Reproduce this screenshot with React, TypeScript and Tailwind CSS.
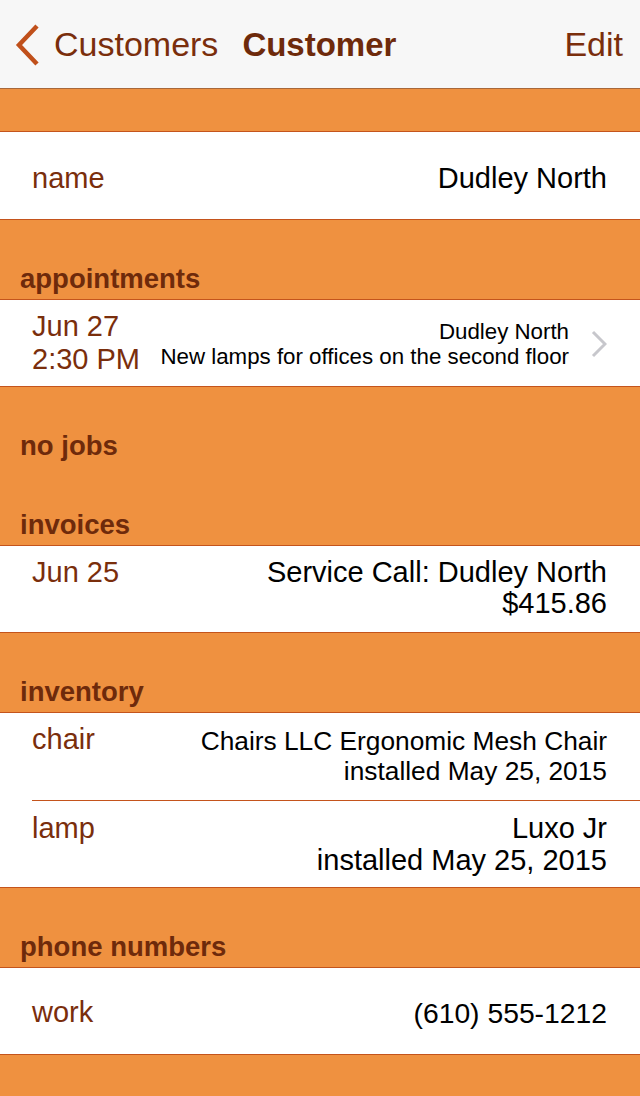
import React from "react";

const FONT = { fontFamily: '"Liberation Sans", Arial, sans-serif' };

function BackChevron() {
  return (
    <svg width="30" height="44" viewBox="0 0 30 44" fill="none">
      <path d="M23 3L5 22l18 19" stroke="#c0501b" strokeWidth="4.5" strokeLinecap="butt" strokeLinejoin="miter" />
    </svg>
  );
}

function Disclosure() {
  return (
    <svg width="16" height="28" viewBox="0 0 16 28" fill="none">
      <path d="M2 2l12 12L2 26" stroke="#c7c7cc" strokeWidth="3" />
    </svg>
  );
}

function Header({ children }: { children: React.ReactNode }) {
  return (
    <p className="text-[27.5px] font-bold leading-[30px] text-[#6e2a0b] px-5">{children}</p>
  );
}

export default function App() {
  return (
    <div className="w-[640px] h-[1096px] overflow-hidden bg-[#ef9140] flex flex-col" style={FONT}>
      {/* nav bar */}
      <div className="h-[89px] shrink-0 bg-[#f7f7f7] border-b border-[#a8683a] flex items-center px-[14px]">
        <div className="flex items-center gap-[10px] pt-[1px]">
          <BackChevron />
          <span className="text-[34px] text-[#7a2e0c]">Customers</span>
          <span className="text-[33px] font-bold text-[#6e2a0b] ml-[14px]">Customer</span>
        </div>
        <span className="ml-auto text-[34px] text-[#7a2e0c] pr-[3px]">Edit</span>
      </div>

      <div className="h-[42px] shrink-0" />

      {/* name */}
      <div className="shrink-0 bg-white border-y border-[#c4541c]">
        <div className="h-[87px] flex items-center justify-between pl-8 pr-[33px] pt-[6px] text-[29px]">
          <span className="text-[#7a2e0c]">name</span>
          <span className="text-black">Dudley North</span>
        </div>
      </div>

      <div className="h-[79px] shrink-0 flex flex-col justify-end pb-[5px]">
        <Header>appointments</Header>
      </div>

      {/* appointment */}
      <div className="shrink-0 bg-white border-y border-[#c4541c]">
        <div className="h-[86px] flex items-center pl-8 pr-[33px]">
          <div className="text-[29px] leading-[33px] text-[#7a2e0c]">
            <p>Jun 27</p>
            <p>2:30 PM</p>
          </div>
          <div className="ml-auto text-right text-[22.3px] leading-[25px] text-black pt-[2px]">
            <p>Dudley North</p>
            <p>New lamps for offices on the second floor</p>
          </div>
          <div className="ml-[22px] pt-[2px]">
            <Disclosure />
          </div>
        </div>
      </div>

      <div className="h-[158px] shrink-0 flex flex-col justify-end pb-[5px] gap-[49px]">
        <Header>no jobs</Header>
        <Header>invoices</Header>
      </div>

      {/* invoice */}
      <div className="shrink-0 bg-white border-y border-[#c4541c]">
        <div className="h-[86px] flex justify-between pl-8 pr-[33px] pt-[11px] text-[29px] leading-[31px]">
          <span className="text-[#7a2e0c]">Jun 25</span>
          <div className="text-right text-black">
            <p>Service Call: Dudley North</p>
            <p>$415.86</p>
          </div>
        </div>
      </div>

      <div className="h-[79px] shrink-0 flex flex-col justify-end pb-[5px]">
        <Header>inventory</Header>
      </div>

      {/* inventory */}
      <div className="shrink-0 bg-white border-y border-[#c4541c]">
        <div className="h-[87px] flex justify-between pl-8 pr-[33px] pt-[11px] text-[29px] leading-[31px]">
          <span className="text-[#7a2e0c]">chair</span>
          <div className="text-right text-black text-[26.3px] leading-[30px] pt-[2px]">
            <p>Chairs LLC Ergonomic Mesh Chair</p>
            <p>installed May 25, 2015</p>
          </div>
        </div>
        <div className="ml-8 border-t border-[#c4541c]" />
        <div className="h-[86px] flex justify-between pl-8 pr-[33px] pt-[11px] text-[29px] leading-[32px]">
          <span className="text-[#7a2e0c]">lamp</span>
          <div className="text-right text-black">
            <p>Luxo Jr</p>
            <p>installed May 25, 2015</p>
          </div>
        </div>
      </div>

      <div className="h-[79px] shrink-0 flex flex-col justify-end pb-[5px]">
        <Header>phone numbers</Header>
      </div>

      {/* phone */}
      <div className="shrink-0 bg-white border-y border-[#c4541c]">
        <div className="h-[86px] flex items-center justify-between pl-8 pr-[33px] pt-[4px] text-[29px]">
          <span className="text-[#7a2e0c]">work</span>
          <span className="text-black text-[28.3px]">(610) 555-1212</span>
        </div>
      </div>

      <div className="flex-1" />
    </div>
  );
}
